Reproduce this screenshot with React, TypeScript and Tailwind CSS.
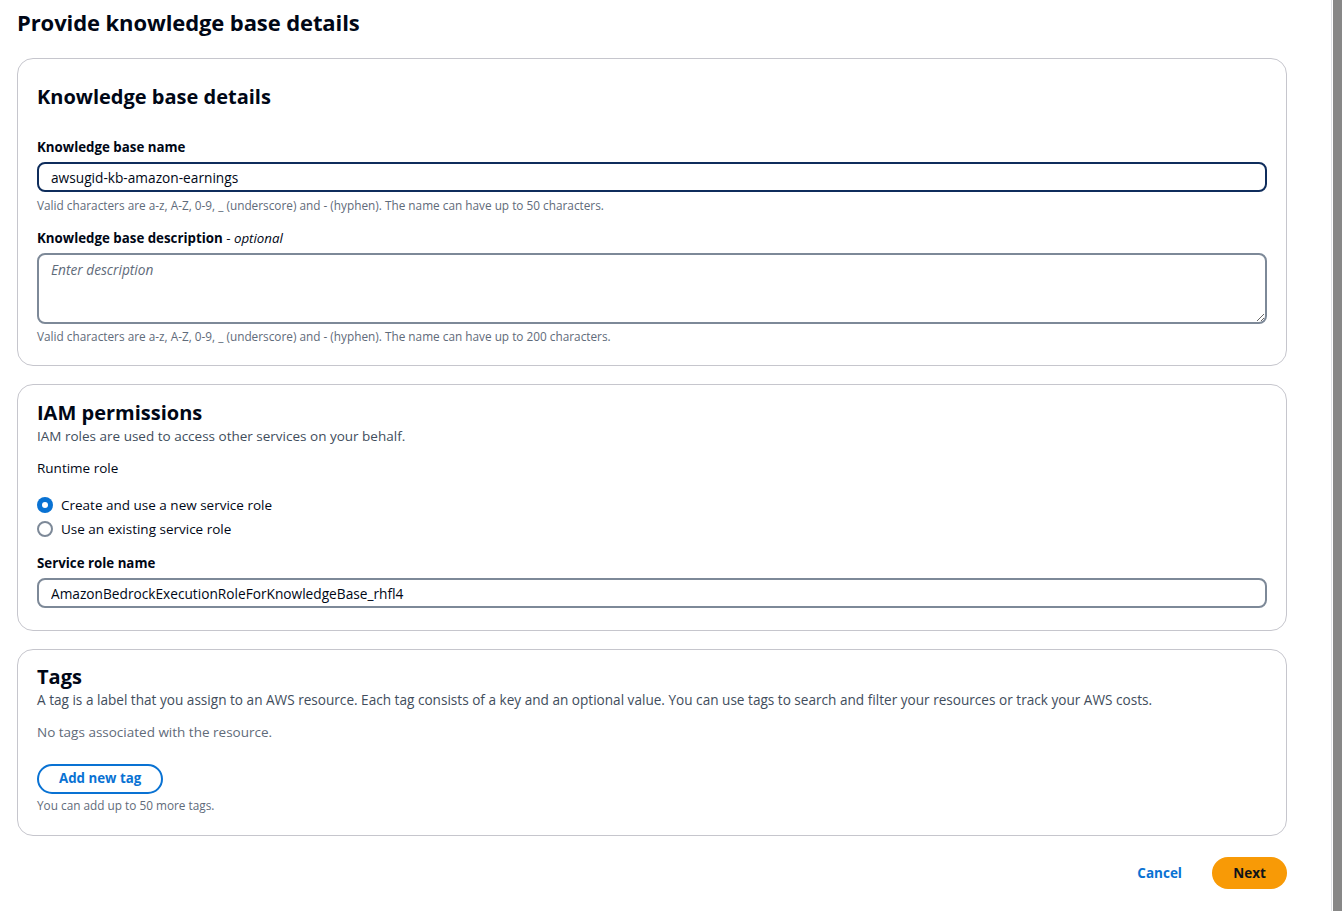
import React from 'react';

function Radio({ checked, label }: { checked?: boolean; label: string }) {
  return (
    <label className="flex items-center gap-2 h-6 text-[13.5px] text-[#000716]">
      {checked ? (
        <span className="w-4 h-4 rounded-full bg-[#0972d3] flex items-center justify-center">
          <span className="w-1.5 h-1.5 rounded-full bg-white" />
        </span>
      ) : (
        <span className="w-4 h-4 rounded-full border-2 border-[#7d8998] bg-white" />
      )}
      <span>{label}</span>
    </label>
  );
}

export default function App() {
  return (
    <div className="w-full h-screen overflow-hidden bg-white grid grid-cols-[minmax(0,1fr)_1px_9px] font-['Open_Sans',sans-serif] text-[#000716]">
      <div className="min-w-0 pl-[17px] pr-[44px] border-r border-[#dfe2e6]">
        {/* ── PAGE TITLE ───────────────────────────── */}
        <h1 className="text-[22px] leading-[28px] font-bold pt-[8px] tracking-[-0.1px]">Provide knowledge base details</h1>

        {/* ── KNOWLEDGE BASE DETAILS ───────────────── */}
        <section className="mt-[22px] border border-[#c6c6cd] rounded-2xl px-[19px] pt-[26px] pb-[22px]">
          <h2 className="text-[20px] leading-6 font-bold">Knowledge base details</h2>

          <div className="mt-[30px] text-[13.3px] leading-[16px] font-bold">Knowledge base name</div>
          <input
            readOnly
            value="awsugid-kb-amazon-earnings"
            className="mt-[7px] w-full h-[30px] rounded-lg border-2 border-[#0f2d5c] px-3 text-[13.7px] outline-none"
          />
          <p className="mt-[6px] text-[11.8px] leading-[14px] text-[#5f6b7a]">
            Valid characters are a-z, A-Z, 0-9, _ (underscore) and - (hyphen). The name can have up to 50 characters.
          </p>

          <div className="mt-[18px] text-[13.3px] leading-[16px] font-bold">
            Knowledge base description <span className="font-normal">-</span> <span className="italic font-normal">optional</span>
          </div>
          <textarea
            placeholder="Enter description"
            className="block mt-[7px] w-full h-[71px] rounded-lg border-2 border-[#7d8998] px-3 py-[5px] text-[13.7px] placeholder:italic placeholder:text-[#5f6b7a] outline-none"
          />
          <p className="mt-[5px] text-[11.8px] leading-[14px] text-[#5f6b7a]">
            Valid characters are a-z, A-Z, 0-9, _ (underscore) and - (hyphen). The name can have up to 200 characters.
          </p>
        </section>

        {/* ── IAM PERMISSIONS ──────────────────────── */}
        <section className="mt-[18px] border border-[#c6c6cd] rounded-2xl px-[19px] pt-[16px] pb-[22px]">
          <h2 className="text-[20px] leading-6 font-bold">IAM permissions</h2>
          <p className="text-[13.5px] leading-[22px] text-[#414d5c]">IAM roles are used to access other services on your behalf.</p>
          <div className="mt-[11px] text-[13.5px] leading-[20px]">Runtime role</div>
          <div className="mt-[15px] flex flex-col">
            <Radio checked label="Create and use a new service role" />
            <Radio label="Use an existing service role" />
          </div>
          <div className="mt-[12px] text-[13.3px] leading-[20px] font-bold">Service role name</div>
          <input
            readOnly
            value="AmazonBedrockExecutionRoleForKnowledgeBase_rhfl4"
            className="mt-[5px] w-full h-[30px] rounded-lg border-2 border-[#7d8998] px-3 text-[13.7px] outline-none"
          />
        </section>

        {/* ── TAGS ─────────────────────────────────── */}
        <section className="mt-[18px] border border-[#c6c6cd] rounded-2xl px-[19px] pt-[15px] pb-[23px]">
          <h2 className="text-[20px] leading-6 font-bold">Tags</h2>
          <p className="text-[13.6px] leading-[22px] text-[#414d5c]">
            A tag is a label that you assign to an AWS resource. Each tag consists of a key and an optional value. You can use tags to search and filter your resources or track your AWS costs.
          </p>
          <p className="mt-[11px] text-[13.5px] leading-[20px] text-[#5f6b7a]">No tags associated with the resource.</p>
          <button className="mt-[22px] h-[30px] px-5 rounded-full border-2 border-[#0972d3] text-[#0972d3] text-[13.3px] font-bold">
            Add new tag
          </button>
          <p className="mt-[4px] text-[11.8px] leading-[14px] text-[#5f6b7a]">You can add up to 50 more tags.</p>
        </section>

        {/* ── ACTIONS ──────────────────────────────── */}
        <div className="mt-[21px] flex justify-end items-center gap-[30px]">
          <button className="text-[13.5px] font-bold text-[#0972d3]">Cancel</button>
          <button className="h-[32px] w-[75px] rounded-full bg-[#f89a06] text-[13.5px] font-bold text-[#0f141a]">Next</button>
        </div>
      </div>
      <div className="bg-white" />
      <div className="bg-[#878787]" />
    </div>
  );
}
